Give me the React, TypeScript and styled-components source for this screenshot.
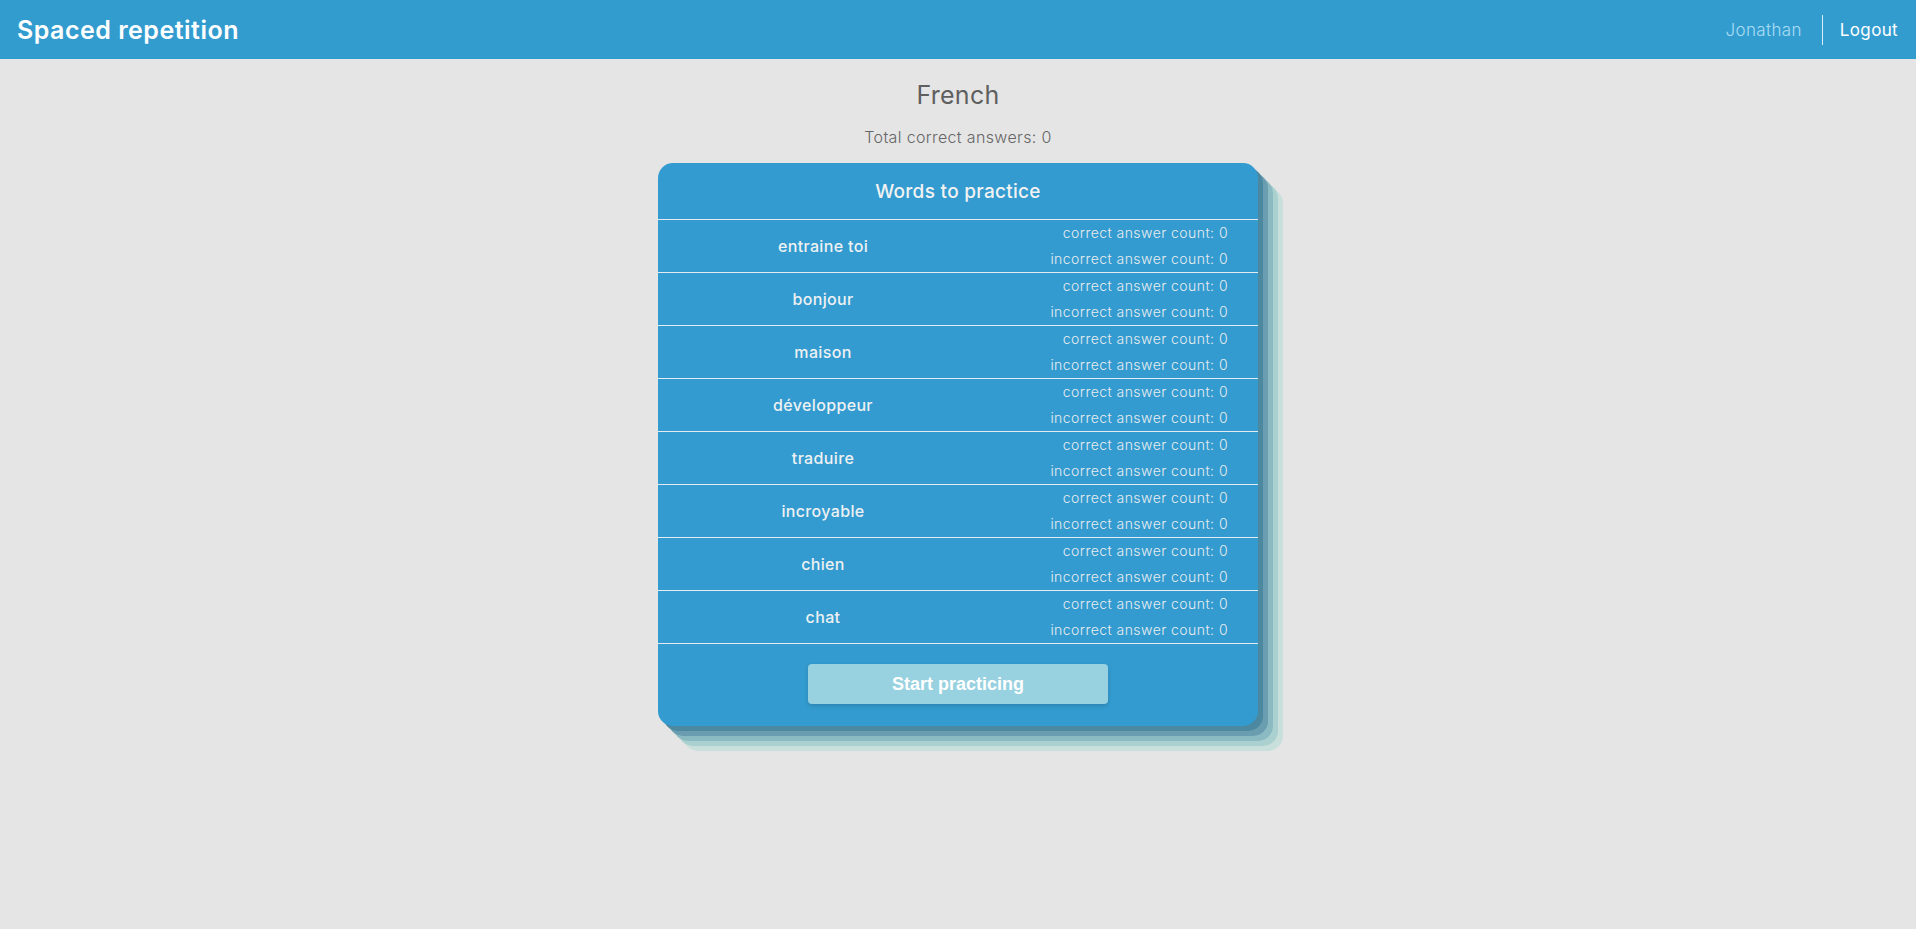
import React from "react";
import styled, { createGlobalStyle } from "styled-components";

const GlobalStyle = createGlobalStyle`
  * { box-sizing: border-box; }
  html, body { min-height: 100%; }
  body {
    margin: 0;
    background: #e5e5e5;
    font-family: Inter, "Open Sans", sans-serif;
  }
`;

const Page = styled.div`
  min-height: 100vh;
`;

const Header = styled.header`
  height: 59px;
  background: #339ccf;
  display: flex;
  align-items: center;
  justify-content: space-between;
  padding: 0 18px 0 17px;
`;

const Brand = styled.h1`
  margin: 0;
  font-size: 25px;
  font-weight: 600;
  letter-spacing: 0.5px;
  color: #ffffff;
`;

const Nav = styled.nav`
  display: flex;
  align-items: center;
`;

const NavText = styled.span<{ $muted?: boolean }>`
  font-size: 17px;
  letter-spacing: 0.35px;
  font-weight: ${(p) => (p.$muted ? 300 : 400)};
  color: ${(p) => (p.$muted ? "#a9dcf3" : "#ffffff")};
`;

const Divider = styled.span`
  width: 1px;
  height: 30px;
  background: #d6eef8;
  margin: 0 17px 0 20px;
`;

const Main = styled.main`
  display: flex;
  flex-direction: column;
  align-items: center;
  padding: 21px 0 60px;
`;

const Title = styled.h2`
  margin: 0;
  font-size: 25px;
  line-height: 30px;
  font-weight: 400;
  letter-spacing: 0.3px;
  color: #5f5f5f;
`;

const Subtitle = styled.p`
  margin: 17px 0 16px;
  font-size: 16px;
  line-height: 20px;
  font-weight: 300;
  letter-spacing: 0.35px;
  color: #666666;
`;

const Card = styled.section`
  width: 600px;
  background: #339bcf;
  border-radius: 15px;
  box-shadow: 5px 5px 0 #4c88a0, 10px 10px 0 #6a9daf, 15px 15px 0 #8cbac2,
    20px 20px 0 #abd0d0, 25px 25px 0 #c9dfdc;
`;

const CardTitle = styled.h3`
  margin: 0;
  height: 57px;
  display: flex;
  align-items: center;
  justify-content: center;
  font-size: 19px;
  font-weight: 500;
  letter-spacing: 0.3px;
  color: #f2f2f2;
  border-bottom: 1px solid #e4ecf0;
`;

const List = styled.ul`
  list-style: none;
  margin: 0;
  padding: 0;
`;

const Row = styled.li`
  display: grid;
  grid-template-columns: 1fr 1fr;
  align-items: center;
  padding: 0 30px;
  height: 53px;
  border-bottom: 1px solid #e4ecf0;
`;

const Word = styled.span`
  text-align: center;
  font-size: 16px;
  font-weight: 500;
  letter-spacing: 0.35px;
  color: #eef1f3;
`;

const Stats = styled.div`
  display: flex;
  flex-direction: column;
  align-items: flex-end;
`;

const Stat = styled.span`
  font-size: 14px;
  line-height: 26px;
  font-weight: 300;
  letter-spacing: 0.45px;
  color: #e8ecef;
`;

const Footer = styled.div`
  display: flex;
  justify-content: center;
  padding: 20px 0 22px;
`;

const Button = styled.button`
  width: 300px;
  height: 40px;
  border: none;
  border-radius: 4px;
  background: #98d1df;
  color: #ffffff;
  font-family: "Liberation Sans", Arial, sans-serif;
  font-size: 18px;
  font-weight: 700;
  box-shadow: 0 2px 4px rgba(0, 0, 0, 0.15);
  cursor: pointer;
`;

const words = [
  "entraine toi",
  "bonjour",
  "maison",
  "développeur",
  "traduire",
  "incroyable",
  "chien",
  "chat",
];

export default function App() {
  return (
    <Page>
      <GlobalStyle />
      <Header>
        <Brand>Spaced repetition</Brand>
        <Nav>
          <NavText $muted>Jonathan</NavText>
          <Divider />
          <NavText>Logout</NavText>
        </Nav>
      </Header>
      <Main>
        <Title>French</Title>
        <Subtitle>Total correct answers: 0</Subtitle>
        <Card>
          <CardTitle>Words to practice</CardTitle>
          <List>
            {words.map((w) => (
              <Row key={w}>
                <Word>{w}</Word>
                <Stats>
                  <Stat>correct answer count: 0</Stat>
                  <Stat>incorrect answer count: 0</Stat>
                </Stats>
              </Row>
            ))}
          </List>
          <Footer>
            <Button>Start practicing</Button>
          </Footer>
        </Card>
      </Main>
    </Page>
  );
}
